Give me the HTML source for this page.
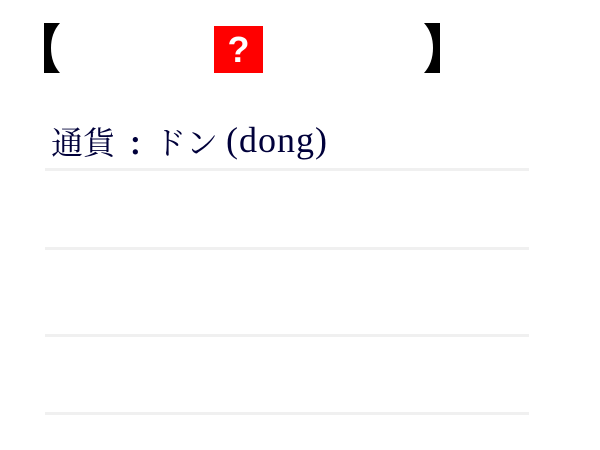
<!DOCTYPE html>
<html><head><meta charset="utf-8"><style>
html,body{margin:0;padding:0;background:#fff;width:600px;height:450px;overflow:hidden;position:relative}
.a{position:absolute}
.line{position:absolute;left:45px;width:484px;height:3px;background:#f0f0f0}
.t{position:absolute;color:#00003a;white-space:nowrap;font-family:'Noto Serif CJK JP','Noto Serif CJK SC',serif;font-size:32px;line-height:40px;top:121px}
.l{font-family:'Liberation Serif',serif;font-size:36px;top:118px;line-height:44px}
</style></head><body>
<svg class="a" style="left:0;top:0" width="600" height="100">
<path d="M44 23 H60 Q51 33 51 48 Q51 63 60 73 H44 Z" fill="#000"/>
<path d="M440 23 H424 Q433 33 433 48 Q433 63 424 73 H440 Z" fill="#000"/>
<rect x="214" y="26" width="49" height="47" fill="#f00"/>
</svg>
<div class="a" style="left:214px;top:26px;width:49px;height:47px;line-height:47px;text-align:center;color:#fff;font:bold 36px/47px 'Liberation Sans',sans-serif">?</div>
<div class="t" style="left:51px">通貨</div>
<div class="t" style="left:130px;font-weight:bold">:</div>
<div class="t" style="left:154px">ドン</div>
<div class="t l" style="left:226px;letter-spacing:1px">(dong)</div>
<div class="line" style="top:168px"></div>
<div class="line" style="top:247px"></div>
<div class="line" style="top:334px"></div>
<div class="line" style="top:412px"></div>
</body></html>
